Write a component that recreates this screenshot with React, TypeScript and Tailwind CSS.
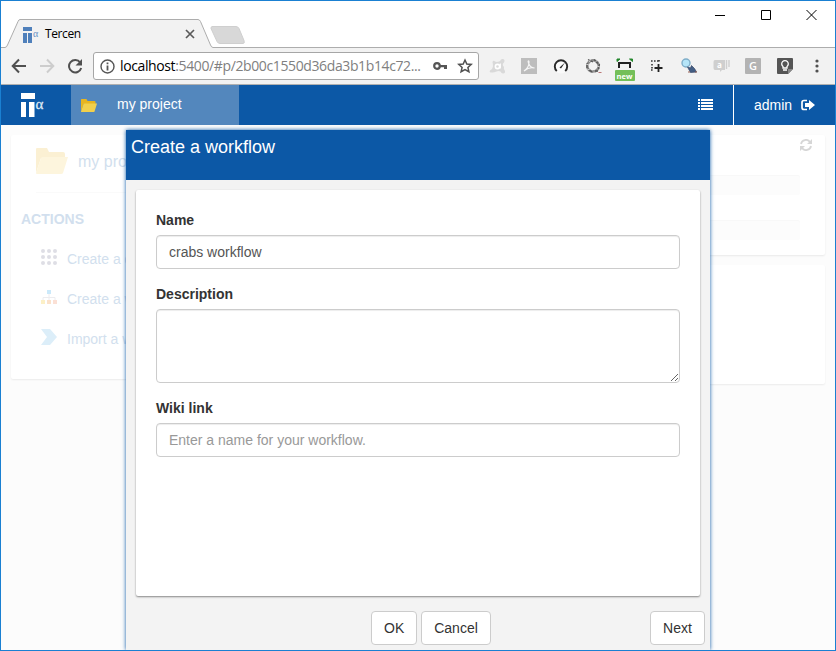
import React from "react";

function TercenMark({ color, alpha }: { color: string; alpha: string }) {
  return (
    <svg width="26" height="26" viewBox="0 0 26 26" className="shrink-0">
      <path d="M1 1h14v6H1zM1 10h5v15H1zM9 10h5.500v15H9z" fill={color} />
      <text x="15.500" y="17" fontSize="15" fill={alpha} stroke={alpha} strokeWidth="0.300" fontFamily="Liberation Serif, serif">α</text>
    </svg>
  );
}

function Folder({ width, height, back, front }: { width: number; height: number; back: string; front: string }) {
  return (
    <svg width={width} height={height} viewBox="0 0 32 26" preserveAspectRatio="none" className="shrink-0">
      <path d="M0 25V1q0-1 1-1h10l2 4h14q2 0 2 2v4H5z" fill={back} />
      <path d="M0 25L5 10q.5-1 2-1h25l-5 16q-.4 1-2 1H1q-1 0-1-1z" fill={front} />
    </svg>
  );
}

function Extension({ children }: { children: React.ReactNode }) {
  return <div className="flex h-9 w-8 shrink-0 items-center justify-center">{children}</div>;
}

function TitleBar() {
  return (
    <div className="relative flex h-[47px] shrink-0 bg-white">
      <svg width="834" height="47" className="absolute inset-0">
        <path d="M0 46.500H4Q5.500 46.500 6.500 44L17 20.500Q17.800 18.500 19 18.500H197Q198.500 18.500 199.500 20.500L209.500 44Q210.500 46.500 212 46.500H834V48H0z" fill="#f2f2f2" stroke="#adadad" />
        <path d="M211 25.500h24q2 0 3 2l5 12q1 3-1 3h-23q-2 0-3-2l-6-13q0-2 1-2z" fill="#d8d8d8" stroke="#cfcfcf" />
      </svg>
      <div className="relative mt-5 flex h-[26px] w-[199px] items-center pl-[21px]">
        <svg width="18" height="17" viewBox="0 0 18 17" className="shrink-0">
          <path d="M1 1h9v4H1zM1 7h4v10H1zM6 7h4v10H6z" fill="#4f80bb" />
          <text x="11" y="11" fontSize="10" fill="#6791c4" fontFamily="Liberation Serif, serif">α</text>
        </svg>
        <span className="ml-[5px] w-[135px] font-['Open_Sans',sans-serif] text-[12px] leading-4 tracking-[-0.4px] text-black">Tercen</span>
        <svg width="10" height="10" viewBox="0 0 10 10" className="ml-[5px]">
          <path d="M1 1l8 8M9 1l-8 8" stroke="#5a5a5a" strokeWidth="1.700" />
        </svg>
      </div>
      <div className="relative ml-auto mr-[18px] mt-[8px] flex h-3 items-center gap-[35px]">
        <svg width="11" height="12"><path d="M0 6.500h10" stroke="#000" /></svg>
        <svg width="10" height="12"><path d="M.5 1.500h9v9h-9z" fill="none" stroke="#000" /></svg>
        <svg width="11" height="12"><path d="M.5 1l10 10M10.500 1L.5 11" stroke="#000" /></svg>
      </div>
    </div>
  );
}

function Toolbar() {
  return (
    <div className="flex h-[37px] shrink-0 items-center border-b border-[#b0b0b0] bg-[#f2f2f2]">
      <div className="flex w-[92px] items-center gap-3 pl-[10px]">
        <svg width="16" height="16" viewBox="0 0 16 16" fill="none" stroke="#505050" strokeWidth="2"><path d="M15 8H2M8 1.500L1.700 8 8 14.500" /></svg>
        <svg width="16" height="16" viewBox="0 0 16 16" fill="none" stroke="#cdcdcd" strokeWidth="2"><path d="M1 8h13M8 1.500L14.300 8 8 14.500" /></svg>
        <svg width="16" height="16" viewBox="0 0 16 16"><path d="M13.200 4.500A6.200 6.200 0 1 0 14.200 10" fill="none" stroke="#505050" strokeWidth="2" /><path d="M15 1v6.500H8.500z" fill="#505050" /></svg>
      </div>
      <div className="flex h-7 w-[386px] shrink-0 items-center rounded-[3px] border border-[#a6a6a6] bg-white pl-[6px] pr-[5px]">
        <svg width="15" height="15" viewBox="0 0 15 15" className="shrink-0"><circle cx="7.500" cy="7.500" r="6.500" fill="none" stroke="#555" strokeWidth="1.400" /><path d="M6.600 3.500h1.800v1.700H6.600zM6.600 6.500h1.800v5H6.600z" fill="#555" /></svg>
        <span className="ml-[5px] w-[313px] shrink-0 whitespace-nowrap font-['Open_Sans',sans-serif] text-[14px] leading-5 tracking-[-0.38px] text-[#808080]"><span className="text-black">localhost</span>:5400/#p/2b00c1550d36da3b1b14c72...</span>
        <svg width="14" height="10" viewBox="0 0 14 10" className="shrink-0"><circle cx="4" cy="5" r="2.800" fill="none" stroke="#555" strokeWidth="2.200" /><path d="M7 4h7v4h-3V6.300H7z" fill="#555" /></svg>
        <svg width="16" height="16" viewBox="0 0 16 16" className="ml-[10px] shrink-0"><path d="M8 2l1.800 4 4.400.4-3.300 3 1 4.300L8 11.500l-3.900 2.200 1-4.300-3.300-3L6.200 6z" fill="none" stroke="#505050" strokeWidth="1.500" /></svg>
      </div>
      <div className="ml-[2px] flex">
        <Extension><svg width="17" height="17" viewBox="0 0 17 17"><path d="M6 3.500q2 1 5-.5 1-2.500 3-2 2.500 1 1 3.500-2.500 2 0 4.500-.5 2 .5 3 1.500 3-1 3.500-2 .5-3-2-2-1-4 0-2 1-4 1H1.500Q0 14 1 12.500q2.500-1 3-4Q4 6 3.500 4q1-2 2.500-.5z" fill="#d9d9d9" /><circle cx="8.500" cy="8.500" r="2.100" fill="none" stroke="#fff" strokeWidth="1.600" /><path d="M11.300 5.500v5" stroke="#fff" strokeWidth="1.200" /></svg></Extension>
        <Extension><svg width="16" height="16" viewBox="0 0 16 16"><path d="M0 0h16v16H0z" fill="#bdbdbd" /><path d="M3 13c3-2 5-5 5-9 0-2-1.500-1-.5 1 1 3 3 5 6 5-3-1-7 0-10.500 3z" fill="none" stroke="#f5f5f5" strokeWidth="1.200" /></svg></Extension>
        <Extension><svg width="16" height="16" viewBox="0 0 16 16"><circle cx="8" cy="8.500" r="7" fill="#fafafa" /><path d="M3.800 13A6.200 6.200 0 1 1 12.200 13" fill="none" stroke="#292929" strokeWidth="1.900" /><path d="M6.500 9.500l5.500-5-4 6z" fill="#292929" /></svg></Extension>
        <Extension><svg width="17" height="17" viewBox="0 0 17 17"><circle cx="8" cy="8" r="5.700" fill="none" stroke="#8a8a8a" strokeWidth="2.600" /><path d="M3 1.500l5 2.500M9 1.500l4 4M14.500 6l-1 5M13 13H8M7 14l-4-3M2 10V5" stroke="#555" strokeWidth="1.300" /><path d="M5.500 1l-1 3M12.500 2l-2 2M15 9l-3-1M9 15v-3M2 12l3-1M1 6l3 1" stroke="#e6e6e6" strokeWidth=".8" /><path d="M13.500 14.500h3" stroke="#b77" /></svg></Extension>
        <Extension>
          <svg width="22" height="24" viewBox="0 0 22 24" className="mt-[6px]"><path d="M5 11V6h11v5" fill="none" stroke="#222" strokeWidth="2" /><path d="M3 4.500V2h3zM15.500 2h3v2.500z" fill="#23872c" stroke="#23872c" /><rect x="1" y="13" width="20" height="11" rx="1" fill="#74bf59" /><text x="10.500" y="21.500" textAnchor="middle" fontSize="7.500" fontWeight="bold" fill="#fff" fontFamily="Open Sans, sans-serif">new</text></svg>
        </Extension>
        <Extension><svg width="12" height="12" viewBox="0 0 12 12"><path d="M0 1h9M1 4v5M0 10h3M8 0v2" stroke="#333" strokeWidth="1.600" strokeDasharray="1.600 1.400" /><path d="M7.500 4v8M3.500 8h8" stroke="#222" strokeWidth="1.800" /></svg></Extension>
        <Extension><svg width="16" height="16" viewBox="0 0 16 16"><circle cx="5" cy="5" r="4" fill="#b5e5f8" stroke="#7faec9" strokeWidth="1.400" /><path d="M6.500 9l3 1 1-2.500 3 3 2 3.500-6 .5z" fill="#445e84" stroke="#334566" strokeWidth=".7" /><path d="M7 14h2M14 14h2" stroke="#9a6255" /></svg></Extension>
        <Extension><svg width="17" height="16" viewBox="0 0 17 16"><path d="M2 2h10v10H9l-2 2v-2H2q-1.500 0-1.500-2V4Q.5 2 2 2z" fill="#cfcfcf" /><path d="M13.500 2v9M16 2v7" stroke="#cfcfcf" strokeWidth="1.400" /><text x="6.500" y="9.500" textAnchor="middle" fontSize="8" fontWeight="bold" fill="#fff" fontFamily="Open Sans, sans-serif">a</text></svg></Extension>
        <Extension><div className="flex size-4 items-center justify-center rounded-[1px] bg-[#b3b3b3] font-['Open_Sans',sans-serif] text-[11px] font-semibold leading-4 text-white">G</div></Extension>
        <Extension><svg width="16" height="16" viewBox="0 0 16 16"><path d="M1 0h14q1 0 1 1v10l-5 5H1q-1 0-1-1V1q0-1 1-1z" fill="#555" /><path d="M11 16v-5h5z" fill="#888" /><path d="M6 10V8.500a3.300 3.300 0 1 1 4 0V10zM6 12h4" fill="none" stroke="#fff" strokeWidth="1.300" /></svg></Extension>
        <Extension><svg width="4" height="14" viewBox="0 0 4 14" fill="#505050"><circle cx="2" cy="2" r="1.600" /><circle cx="2" cy="7" r="1.600" /><circle cx="2" cy="12" r="1.600" /></svg></Extension>
      </div>
    </div>
  );
}

function NavBar() {
  return (
    <nav className="flex h-10 shrink-0 bg-[#0c58a6] text-[14px] leading-5 text-white">
      <div className="flex w-[70px] items-center pl-[19px]"><TercenMark color="#fff" alpha="#dce8f5" /></div>
      <div className="flex w-[168px] items-center bg-[#5387bd] pl-[10px]">
        <Folder width={16} height={13} back="#e8b520" front="#f2d04c" />
        <span className="ml-5 pb-[2px]">my project</span>
      </div>
      <div className="ml-auto flex items-center pb-[2px] pr-[20px]">
        <svg width="15" height="11" viewBox="0 0 15 11" fill="#fff"><path d="M0 0h2v2H0zM3 0h12v2H3zM0 3h2v2H0zM3 3h12v2H3zM0 6h2v2H0zM3 6h12v2H3zM0 9h2v2H0zM3 9h12v2H3z" /></svg>
      </div>
      <div className="flex w-[102px] items-center border-l border-white pl-5">
        <span>admin</span>
        <svg width="14" height="12" viewBox="0 0 14 12" className="ml-[9px]"><path d="M6 1.500H3Q1 1.500 1 3.500v5q0 2 2 2h3" fill="none" stroke="#fff" strokeWidth="1.700" /><path d="M4 4h4V1l6 5-6 5V8H4z" fill="#fff" /></svg>
      </div>
    </nav>
  );
}

function Action({ icon, label }: { icon: React.ReactNode; label: string }) {
  return (
    <div className="flex h-10 items-center pl-[30px]">
      {icon}
      <span className="ml-[10px] w-[59px] overflow-hidden whitespace-nowrap text-[14px] leading-5">{label}</span>
    </div>
  );
}

function ProjectPage() {
  return (
    <div className="flex gap-[10px] px-[10px] pt-[10px]">
      <section className="h-[244px] w-[240px] rounded-[2px] bg-white text-[#d2dfee] shadow-[0_1px_2px_rgba(0,0,0,0.07)]">
        <div className="mx-[25px] flex h-[58px] items-center whitespace-nowrap border-b border-[#fafafa] pb-[5px] text-[16px] leading-5">
          <Folder width={32} height={26} back="#fbf0d3" front="#fdf5dd" />
          <span className="ml-[10px] w-[48px] overflow-hidden pt-px">my project</span>
        </div>
        <h2 className="ml-[10px] mt-[16px] text-[14px] font-bold leading-5">ACTIONS</h2>
        <div className="mt-[10px]">
          <Action label="Create a d" icon={<svg width="16" height="16" viewBox="0 0 16 16" fill="#dedee5" className="-mt-1">{[2, 8, 14].map((y) => [2, 8, 14].map((x) => <circle key={`${x}-${y}`} cx={x} cy={y} r="2" />))}</svg>} />
          <Action label="Create a w" icon={<svg width="16" height="15" viewBox="0 0 16 15" className="-mt-1"><path d="M8 4v6M2 10V7.500h12V10" fill="none" stroke="#ececef" /><path d="M6 0h4v4H6z" fill="#cbe9fa" /><path d="M0 10h4v4H0z" fill="#fcf0c7" /><path d="M6 10h4v4H6z" fill="#fbe2cb" /><path d="M12 10h4v4h-4z" fill="#fbe0d5" /></svg>} />
          <Action label="Import a w" icon={<svg width="16" height="16" viewBox="0 0 16 16" className="-mt-1"><path d="M0 0h9l7 8-7 8H0l6-8z" fill="#dceef9" /></svg>} />
        </div>
      </section>
      <div className="flex flex-1 flex-col gap-[10px]">
        <section className="h-[120px] rounded-[2px] bg-white px-[25px] shadow-[0_1px_2px_rgba(0,0,0,0.08)]">
          <div className="-mr-3 flex h-10 justify-end pt-1">
            <svg width="12" height="12" viewBox="0 0 12 12"><path d="M1 5A5 5 0 0 1 10 3M11 7a5 5 0 0 1-9 2" fill="none" stroke="#d6d6d6" strokeWidth="1.800" /><path d="M12 0v5H7zM0 12V7h5z" fill="#d6d6d6" /></svg>
          </div>
          <div className="h-5 rounded-[2px] bg-[#fcfcfc] shadow-[inset_0_1px_1px_rgba(0,0,0,0.02)]" />
          <div className="mt-[25px] h-5 rounded-[2px] bg-[#fcfcfc] shadow-[inset_0_1px_1px_rgba(0,0,0,0.02)]" />
        </section>
        <section className="h-[119px] rounded-[2px] bg-white shadow-[0_1px_2px_rgba(0,0,0,0.07)]" />
      </div>
    </div>
  );
}

const fieldStyle = "block w-full rounded-[4px] border border-[#ccc] bg-white px-3 text-[14px] leading-5 text-[#555] shadow-[inset_0_1px_1px_rgba(0,0,0,0.075)] placeholder:text-[#999] outline-none";
const labelStyle = "block h-[25px] text-[14px] font-bold leading-5 text-[#333]";
const buttonStyle = "h-[34px] rounded-[4px] border border-[#ccc] bg-white px-3 text-[14px] leading-5 text-[#333]";

function WorkflowDialog() {
  return (
    <div className="absolute left-[125px] top-[5px] flex h-[520px] w-[584px] flex-col bg-[#f3f3f3] shadow-[0_0_4px_#0c58a6]">
      <h1 className="h-[50px] bg-[#0c58a6] pl-[5px] pt-[7px] text-[18px] leading-5 text-white">Create a workflow</h1>
      <div className="mx-[10px] mt-[10px] h-[406px] rounded-[2px] bg-white px-5 pt-5 shadow-[0_1px_2px_rgba(0,0,0,0.45)]">
        <label className={labelStyle} htmlFor="workflow-name">Name</label>
        <input id="workflow-name" className={`${fieldStyle} h-[34px]`} defaultValue="crabs workflow" />
        <label className={`${labelStyle} mt-[15px]`} htmlFor="workflow-description">Description</label>
        <textarea id="workflow-description" className={`${fieldStyle} h-[74px] resize-y py-[6px]`} />
        <label className={`${labelStyle} mt-[15px]`} htmlFor="workflow-wiki">Wiki link</label>
        <input id="workflow-wiki" className={`${fieldStyle} h-[34px]`} placeholder="Enter a name for your workflow." />
      </div>
      <div className="mt-[15px] flex gap-1 pl-[245px] pr-[5px]">
        <button className={`${buttonStyle} w-[46px]`}>OK</button>
        <button className={`${buttonStyle} w-[70px]`}>Cancel</button>
        <button className={`${buttonStyle} ml-auto w-[55px]`}>Next</button>
      </div>
    </div>
  );
}

export default function App() {
  return (
    <div className="flex h-[651px] w-[836px] flex-col overflow-hidden border border-[#1a80d2] bg-[#fcfcfc] font-['Liberation_Sans',Arial,sans-serif]">
      <TitleBar />
      <Toolbar />
      <NavBar />
      <main className="relative flex-1 overflow-hidden">
        <ProjectPage />
        <WorkflowDialog />
      </main>
    </div>
  );
}
